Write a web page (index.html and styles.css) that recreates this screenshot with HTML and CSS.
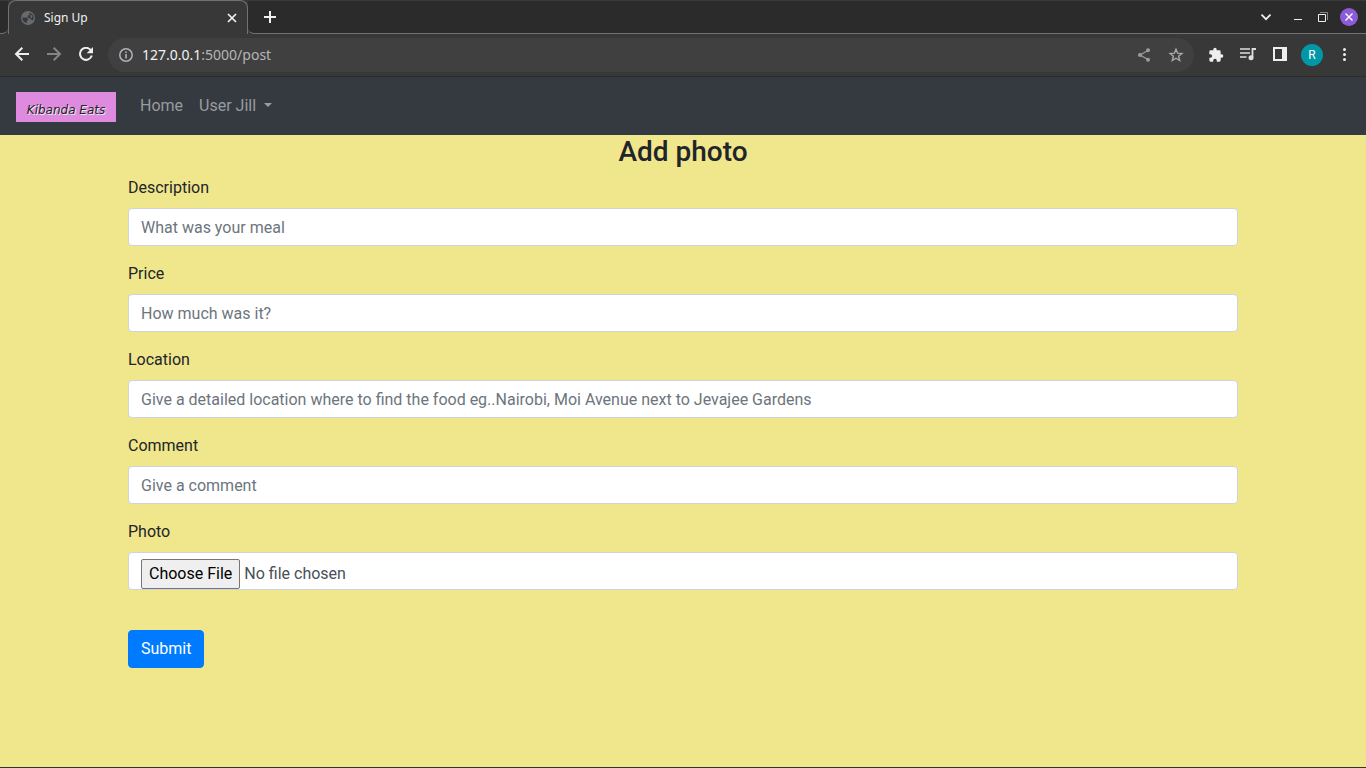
FILE: index.html
```html
<!DOCTYPE html>
<html lang="en">
<head>
<meta charset="utf-8">
<meta name="viewport" content="width=device-width, initial-scale=1">
<title>Sign Up</title>
<link rel="stylesheet" href="styles.css">
</head>
<body>
<div class="window">
  <header class="browser">
    <div class="tabstrip">
      <div class="tab-lead"></div>
      <div class="tab">
        <svg class="icon" width="16" height="16" viewBox="0 0 16 16"><circle cx="8" cy="8" r="7" fill="#676b70"/><path d="M2.300 7.600h3.500c1.300 0 2.200.9 2.200 2v.8H6.800v2.700A5.600 5.600 0 0 1 2.300 7.600zM9 2.500c2.900.5 4.800 2.800 4.700 5.500-.2 1-.6 1.900-1.200 2.700-.3-.9-.9-1.300-1.900-1.200V8.300c-1.500-.2-3-.5-3-1.600 0-1.200.5-1.500 1.700-1.500.9 0 .2-1.200-.3-2.700z" fill="#383838"/><path d="M10.500 4.500l2 1.500-.5 2-1.500-.4z" fill="#676b70"/></svg>
        <span class="tab-title">Sign Up</span>
        <button class="tool tab-close" type="button" aria-label="Close tab"><svg width="16" height="16" viewBox="0 0 16 16"><path d="M4 4l8 8M12 4l-8 8" stroke="#f1f1f1" stroke-width="1.700"/></svg></button>
      </div>
      <div class="tab-rest">
        <button class="tool" type="button" aria-label="New tab"><svg width="16" height="16" viewBox="0 0 16 16"><path d="M8 2v12M2 8h12" stroke="#f1f1f1" stroke-width="2"/></svg></button>
        <div class="window-controls">
          <button class="tool" type="button" aria-label="Search tabs"><svg width="16" height="16" viewBox="0 0 16 16"><path d="M3.500 5.700L8 10.200l4.500-4.500" fill="none" stroke="#eee" stroke-width="1.800"/></svg></button>
          <button class="tool" type="button" aria-label="Minimize"><svg width="16" height="16" viewBox="0 0 16 16"><path d="M4 10.500h8" stroke="#eee"/></svg></button>
          <button class="tool" type="button" aria-label="Restore"><svg width="16" height="16" viewBox="0 0 16 16"><path d="M5 3.500h7.500V11" fill="none" stroke="#888"/><path d="M3.500 5.500h7v7h-7z" fill="none" stroke="#eee"/></svg></button>
          <button class="tool" type="button" aria-label="Close window"><svg width="18" height="18" viewBox="0 0 18 18"><circle cx="9" cy="9" r="9" fill="#8d5bd8"/><path d="M5.500 5.500l7 7M12.500 5.500l-7 7" stroke="#fff" stroke-width="1.400"/></svg></button>
        </div>
      </div>
    </div>
    <div class="toolbar">
      <div class="nav-buttons">
        <button class="tool" type="button" aria-label="Back"><svg width="16" height="16" viewBox="0 0 16 16"><path d="M15 7H2.500M8.300 .7L2 7l6.300 6.300" fill="none" stroke="#eee" stroke-width="2"/></svg></button>
        <button class="tool" type="button" aria-label="Forward"><svg width="16" height="16" viewBox="0 0 16 16"><path d="M1 7h12.500M7.700 .7L14 7l-6.300 6.300" fill="none" stroke="#858585" stroke-width="2"/></svg></button>
        <button class="tool" type="button" aria-label="Reload"><svg width="16" height="16" viewBox="0 0 16 16"><path d="M12.800 3.200A6 6 0 1 0 13.800 8.500" fill="none" stroke="#eee" stroke-width="2"/><path d="M15 0v6.300H8.700z" fill="#eee"/></svg></button>
      </div>
      <div class="address">
        <svg class="icon" width="16" height="16" viewBox="0 0 16 16"><circle cx="8" cy="8" r="6.200" fill="none" stroke="#aeb1b5" stroke-width="1.500"/><path d="M8 7v4.500M8 4.400V6" stroke="#aeb1b5" stroke-width="1.600"/></svg>
        <span class="url"><span class="host">127.0.0.1</span>:5000/post</span>
        <button class="tool" type="button" aria-label="Share"><svg width="16" height="16" viewBox="0 0 16 16"><path d="M12 3.500L4 8l8 4.500" fill="none" stroke="#9c9c9c" stroke-width="1.300"/><g fill="#9c9c9c"><circle cx="12" cy="3.300" r="2"/><circle cx="4" cy="8" r="2"/><circle cx="12" cy="12.700" r="2"/></g></svg></button>
        <button class="tool" type="button" aria-label="Bookmark"><svg width="16" height="16" viewBox="0 0 16 16"><path d="M8 2.200l1.600 4 4.300.3-3.300 2.800 1.100 4.200L8 11.200l-3.700 2.300 1.100-4.200L2.100 6.500l4.300-.3z" fill="none" stroke="#a8a8a8" stroke-width="1.400"/></svg></button>
      </div>
      <div class="actions">
        <button class="tool" type="button" aria-label="Extensions"><svg width="16" height="16" viewBox="0 0 24 24"><path d="M20.500 11H19V7a2 2 0 0 0-2-2h-4V3.500a2.500 2.500 0 0 0-5 0V5H4a2 2 0 0 0-2 2v3.800h1.500a2.700 2.700 0 0 1 0 5.400H2V20a2 2 0 0 0 2 2h3.800v-1.500a2.700 2.700 0 0 1 5.400 0V22H17a2 2 0 0 0 2-2v-4h1.500a2.500 2.500 0 0 0 0-5z" fill="#eee"/></svg></button>
        <button class="tool" type="button" aria-label="Media"><svg width="16" height="16" viewBox="0 0 16 16"><path d="M0 2h10M0 6h10M0 10h6.500" stroke="#ddd" stroke-width="1.700"/><path d="M12.500 10.500v-8.500H16" fill="none" stroke="#ddd" stroke-width="1.800"/><circle cx="11" cy="10.800" r="2.500" fill="#ddd"/></svg></button>
        <button class="tool" type="button" aria-label="Side panel"><svg width="16" height="16" viewBox="0 0 16 16"><path d="M1 0h14v14H1zM3 2v10h7V2z" fill="#eee" fill-rule="evenodd"/></svg></button>
        <button class="avatar" type="button">R</button>
        <button class="tool" type="button" aria-label="Menu"><svg width="16" height="16" viewBox="0 0 16 16"><g fill="#eee"><circle cx="8.500" cy="2.500" r="1.500"/><circle cx="8.500" cy="7.500" r="1.500"/><circle cx="8.500" cy="12.500" r="1.500"/></g></svg></button>
      </div>
    </div>
  </header>
  <div class="page">
    <nav class="navbar">
      <a class="brand" href="#">Kibanda Eats</a>
      <a class="nav-link" href="#">Home</a>
      <a class="nav-link dropdown" href="#">User Jill</a>
    </nav>
    <main class="container">
      <h1 class="heading">Add photo</h1>
      <form class="form">
        <div class="group"><label class="label" for="description">Description</label><input class="control" id="description" type="text" placeholder="What was your meal"></div>
        <div class="group"><label class="label" for="price">Price</label><input class="control" id="price" type="text" placeholder="How much was it?"></div>
        <div class="group"><label class="label" for="location">Location</label><input class="control" id="location" type="text" placeholder="Give a detailed location where to find the food eg..Nairobi, Moi Avenue next to Jevajee Gardens"></div>
        <div class="group"><label class="label" for="comment">Comment</label><input class="control" id="comment" type="text" placeholder="Give a comment"></div>
        <div class="group"><label class="label" for="photo">Photo</label><input class="control" id="photo" type="file"></div>
        <button class="submit" type="submit">Submit</button>
      </form>
    </main>
  </div>
</div>
</body>
</html>
```
FILE: styles.css
```css
* { box-sizing: border-box; }
body {
  margin: 0;
  font: 16px/24px Roboto, "Liberation Sans", sans-serif;
  color: #212529;
  background: #f0e68c;
}
.window {
  min-height: 100vh;
  display: flex;
  flex-direction: column;
  border-bottom: 1px solid #33322c;
}
.browser {
  background: #383838;
  color: #f1f1f1;
  font-family: "Noto Sans", sans-serif;
  border-bottom: 1px solid #2b2b2b;
}
.icon { flex: none; }
.tool {
  display: flex;
  flex: none;
  padding: 0;
  border: 0;
  background: none;
}
.tabstrip {
  display: flex;
  height: 34px;
  background: #383838;
}
.tab-lead {
  width: 8px;
  background: #2b2b2b;
  border-top: 1px solid #383838;
  border-bottom: 1px solid #727272;
  border-bottom-right-radius: 6px;
}
.tab {
  display: flex;
  align-items: center;
  gap: 8px;
  width: 240px;
  padding: 0 7px 0 11px;
  border: 1px solid #727272;
  border-bottom: 0;
  border-radius: 8px 8px 0 0;
}
.tab-title { flex: 1; font-size: 12px; line-height: 16px; }
.tab-rest {
  flex: 1;
  display: flex;
  align-items: center;
  justify-content: space-between;
  padding: 0 8px 0 14px;
  background: #2b2b2b;
  border-top: 1px solid #383838;
  border-bottom: 1px solid #727272;
  border-bottom-left-radius: 6px;
}
.window-controls { display: flex; align-items: center; gap: 9px; }
.window-controls .tool:first-child { margin-right: 7px; }
.toolbar {
  display: flex;
  align-items: center;
  height: 42px;
  padding: 0 14px;
  gap: 14px;
}
.nav-buttons { display: flex; gap: 16px; }
.address {
  flex: 1;
  display: flex;
  align-items: center;
  gap: 16px;
  height: 34px;
  padding: 0 10px;
  border-radius: 17px;
  background: #404040;
}
.url { flex: 1; margin-left: -8px; font-size: 14px; line-height: 20px; color: #b5b5b5; }
.host { color: #f1f1f1; }
.actions { display: flex; align-items: center; gap: 16px; }
.avatar {
  width: 22px;
  height: 22px;
  margin: 0 -3px;
  padding: 0;
  border: 0;
  border-radius: 50%;
  background: #0097a7;
  color: #fff;
  font: 12px/22px Roboto, sans-serif;
}
.page { flex: 1; }
.navbar {
  display: flex;
  align-items: center;
  height: 58px;
  padding: 0 16px;
  background: #343a40;
}
.brand {
  width: 100px;
  height: 30px;
  margin: 2px 16px 0 0;
  background: #dd8adf;
  color: #222;
  font: italic 12px/36px "DejaVu Sans", sans-serif;
  text-align: center;
  text-decoration: none;
  text-shadow: 1px 1px 0 #eee;
}
.nav-link { padding: 0 8px; color: #999c9f; text-decoration: none; }
.dropdown::after {
  content: "";
  display: inline-block;
  margin-left: 8px;
  vertical-align: 4px;
  border: 4px solid transparent;
  border-top-color: currentColor;
  border-bottom: 0;
}
.container { max-width: 1140px; margin: 0 auto; padding: 0 15px; }
.heading {
  margin: 0 0 8px;
  font-size: 28px;
  font-weight: 500;
  line-height: 33px;
  text-align: center;
}
.group { margin-bottom: 16px; }
.label { display: block; margin-bottom: 8px; }
.control {
  display: block;
  width: 100%;
  height: 38px;
  padding: 6px 12px;
  border: 1px solid #ced4da;
  border-radius: 4px;
  background: #fff;
  color: #495057;
  font: inherit;
}
.control::placeholder { color: #6c757d; opacity: 1; }
.control::file-selector-button {
  height: 30px;
  padding: 0 7px;
  border: 1px solid #767676;
  border-radius: 2px;
  background: #efefef;
  font: inherit;
}
.submit {
  margin-top: 24px;
  padding: 6px 12px;
  border: 1px solid #007bff;
  border-radius: 4px;
  background: #007bff;
  color: #fff;
  font: inherit;
}
```
